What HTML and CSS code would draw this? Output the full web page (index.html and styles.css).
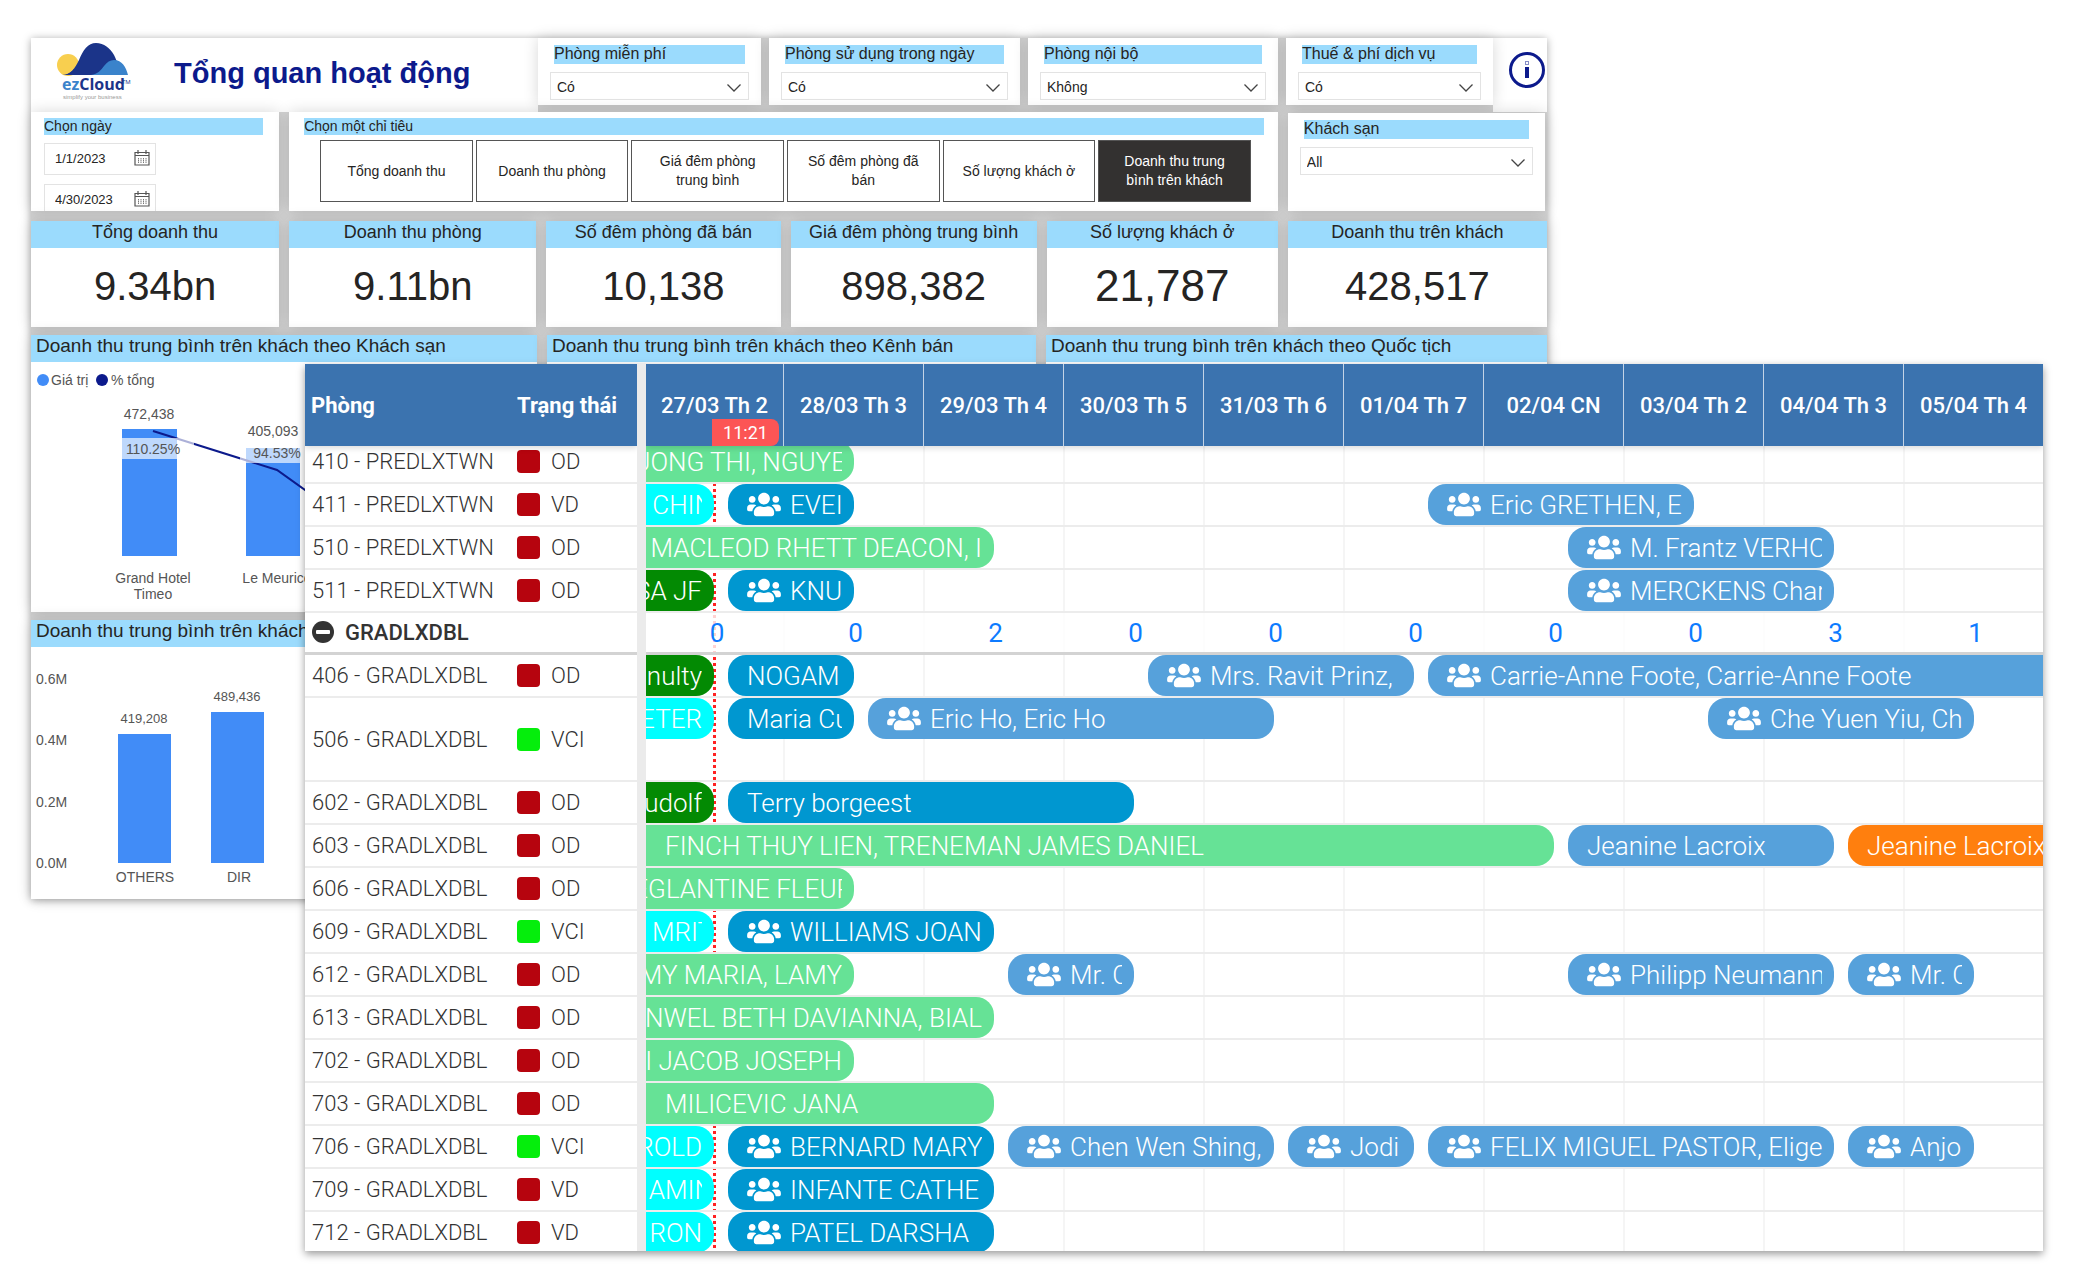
FILE: index.html
```html
<!DOCTYPE html>
<html lang="vi">
<head>
<meta charset="utf-8">
<title>ezCloud – Tổng quan hoạt động</title>
<link rel="stylesheet" href="styles.css">
</head>
<body>
<svg width="0" height="0" class="defs" aria-hidden="true">
  <symbol id="users" viewBox="0 0 640 512"><path d="M96 224c35.3 0 64-28.7 64-64s-28.700-64-64-64-64 28.700-64 64 28.700 64 64 64zm448 0c35.300 0 64-28.700 64-64s-28.700-64-64-64-64 28.700-64 64 28.700 64 64 64zm32 32h-64c-17.600 0-33.500 7.100-45.100 18.600 40.300 22.100 68.900 62 75.100 109.400h66c17.700 0 32-14.300 32-32v-32c0-35.300-28.700-64-64-64zm-256 0c61.900 0 112-50.100 112-112S381.900 32 320 32 208 82.100 208 144s50.100 112 112 112zm76.800 32h-8.300c-20.800 10-43.900 16-68.500 16s-47.600-6-68.500-16h-8.300C179.600 288 128 339.600 128 403.200V432c0 26.500 21.500 48 48 48h288c26.500 0 48-21.500 48-48v-28.800c0-63.600-51.600-115.200-115.200-115.200zm-223.700-13.400C161.500 263.100 145.600 256 128 256H64c-35.300 0-64 28.700-64 64v32c0 17.700 14.300 32 32 32h65.900c6.300-47.400 34.900-87.300 75.200-109.400z"/></symbol>
  <symbol id="chevron" viewBox="0 0 14 8"><path d="M.5.500 7 7 13.500.500" fill="none" stroke="#444" stroke-width="1.300"/></symbol>
  <symbol id="calendar" viewBox="0 0 16 16"><path d="M1 2.500h14v12.500H1zM1 5.500h14M4 0v4M12 0v4" fill="none" stroke="#555" stroke-width="1.200"/><path d="M4.500 8v5M7 8v5M9.500 8v5M12 8v5" stroke="#777" stroke-width="1" stroke-dasharray="1.500 .5"/></symbol>
</svg>

<main class="stage">
  <section class="dash">
    <div class="row row-top">
      <header class="brand">
        <svg class="logo" width="76" height="60" viewBox="0 0 76 60" role="img" aria-label="ezCloud">
          <circle cx="12" cy="23" r="11" fill="#f8cf4f"/>
          <path d="M6 33C15 33 19 26 23 18 27 8 32 1 40 1c8 0 14 5 18 12 3 6 5 14 10 20z" fill="#1b3489"/>
          <path d="M5 33c6 0 10-2 13-6l14 6z" fill="#1b3489"/>
          <path d="M35 33c7-1 10-5 13-9 3-4 6-6 10-6 8 0 12 7 14 15z" fill="#3a83cb"/>
          <text x="6" y="48" class="logo-name"><tspan fill="#3a83cb">ez</tspan><tspan fill="#1b3489">Cloud</tspan></text>
          <text x="66" y="42" class="logo-tm">TM</text>
          <text x="7" y="57" class="logo-tag">simplify your business</text>
        </svg>
        <h1>Tổng quan hoạt động</h1>
      </header>
      <div class="info"><button type="button" class="info-btn" aria-label="Thông tin">
        <svg width="38" height="38" viewBox="0 0 38 38"><circle cx="19" cy="19" r="16.500" fill="none" stroke="#0c1a8c" stroke-width="3"/><path d="M17 16h4v11h-4z" fill="#0c1a8c"/><path d="M17.500 10.500h3v3h-3z" fill="none" stroke="#0c1a8c" stroke-width="1" stroke-dasharray="1 1"/></svg>
      </button></div>
      <div class="card filter f1"><label for="free">Phòng miễn phí</label><div class="pick"><select id="free"><option>Có</option><option>Không</option></select><svg width="14" height="8"><use href="#chevron"/></svg></div></div>
      <div class="card filter f2"><label for="dayuse">Phòng sử dụng trong ngày</label><div class="pick"><select id="dayuse"><option>Có</option><option>Không</option></select><svg width="14" height="8"><use href="#chevron"/></svg></div></div>
      <div class="card filter f3"><label for="internal">Phòng nội bộ</label><div class="pick"><select id="internal"><option>Không</option><option>Có</option></select><svg width="14" height="8"><use href="#chevron"/></svg></div></div>
      <div class="card filter f4"><label for="tax">Thuế &amp; phí dịch vụ</label><div class="pick"><select id="tax"><option>Có</option><option>Không</option></select><svg width="14" height="8"><use href="#chevron"/></svg></div></div>
    </div>

    <div class="row row-mid">
      <div class="card dates">
        <label for="from" class="cap">Chọn ngày</label>
        <div class="date"><input id="from" type="text" value="1/1/2023"><svg width="16" height="16"><use href="#calendar"/></svg></div>
        <div class="date"><input type="text" value="4/30/2023" aria-label="Đến ngày"><svg width="16" height="16"><use href="#calendar"/></svg></div>
      </div>
      <div class="card metrics">
        <div class="cap">Chọn một chỉ tiêu</div>
        <div class="metric-list">
          <button type="button">Tổng doanh thu</button>
          <button type="button">Doanh thu phòng</button>
          <button type="button">Giá đêm phòng trung bình</button>
          <button type="button">Số đêm phòng đã bán</button>
          <button type="button">Số lượng khách ở</button>
          <button type="button" class="on">Doanh thu trung bình trên khách</button>
        </div>
      </div>
      <div class="card filter hotel"><label for="hotel">Khách sạn</label><div class="pick"><select id="hotel"><option>All</option></select><svg width="14" height="8"><use href="#chevron"/></svg></div></div>
    </div>

    <div class="row row-kpi">
      <div class="card kpi"><h2>Tổng doanh thu</h2><p>9.34bn</p></div>
      <div class="card kpi"><h2>Doanh thu phòng</h2><p>9.11bn</p></div>
      <div class="card kpi"><h2>Số đêm phòng đã bán</h2><p>10,138</p></div>
      <div class="card kpi"><h2>Giá đêm phòng trung bình</h2><p>898,382</p></div>
      <div class="card kpi big"><h2>Số lượng khách ở</h2><p>21,787</p></div>
      <div class="card kpi"><h2>Doanh thu trên khách</h2><p>428,517</p></div>
    </div>

    <div class="row row-chart">
      <div class="card chart"><h2>Doanh thu trung bình trên khách theo Khách sạn</h2>
        <svg width="420" height="250" viewBox="0 0 420 250">
          <circle cx="12" cy="18" r="6" fill="#418cf7"/><text x="20" y="23">Giá trị</text>
          <circle cx="71" cy="18" r="6" fill="#0c1a8c"/><text x="80" y="23">% tổng</text>
          <g fill="#418cf7"><path d="M91 67h55v127H91zM215 86h54v108h-54z"/></g>
          <path d="M122 69 246 108 330 168" fill="none" stroke="#0c1a8c" stroke-width="2"/>
          <g fill="#fff" fill-opacity=".66"><path d="M91 76h72v21H91zM209 86h72v15h-72z"/></g>
          <g text-anchor="middle"><text x="118" y="57">472,438</text><text x="242" y="74">405,093</text>
          <text x="122" y="92">110.25%</text><text x="246" y="96">94.53%</text>
          <text x="122" y="221">Grand Hotel</text><text x="122" y="237">Timeo</text><text x="246" y="221">Le Meurice</text></g>
        </svg>
      </div>
      <div class="card chart"><h2>Doanh thu trung bình trên khách theo Kênh bán</h2></div>
      <div class="card chart"><h2>Doanh thu trung bình trên khách theo Quốc tịch</h2></div>
    </div>

    <div class="row row-chart">
      <div class="card chart"><h2>Doanh thu trung bình trên khách</h2>
        <svg width="420" height="252" viewBox="0 0 420 252">
          <text x="5" y="37">0.6M</text><text x="5" y="98">0.4M</text><text x="5" y="160">0.2M</text><text x="5" y="221">0.0M</text>
          <path d="M87 87h53v129H87zM180 65h53v151h-53z" fill="#418cf7"/>
          <g text-anchor="middle"><text x="113" y="76" class="small">419,208</text><text x="206" y="54" class="small">489,436</text>
          <text x="114" y="235">OTHERS</text><text x="208" y="235">DIR</text></g>
        </svg>
      </div>
    </div>
  </section>

  <section class="plan">
    <div class="rooms">
      <table>
        <thead><tr><th scope="col">Phòng</th><th scope="col">Trạng thái</th></tr></thead>
      </table>
      <div class="scrolled">
      <table>
        <tbody>
          <tr><td>410 - PREDLXTWN</td><td><i></i>OD</td></tr>
          <tr><td>411 - PREDLXTWN</td><td><i></i>VD</td></tr>
          <tr><td>510 - PREDLXTWN</td><td><i></i>OD</td></tr>
          <tr><td>511 - PREDLXTWN</td><td><i></i>OD</td></tr>
          <tr class="group"><th colspan="2" scope="rowgroup"><button type="button" aria-label="Thu gọn"><svg width="22" height="22" viewBox="0 0 22 22"><circle cx="11" cy="11" r="11" fill="#333"/><rect x="4" y="9" width="14" height="4" rx="1" fill="#fff"/></svg></button>GRADLXDBL</th></tr>
          <tr><td>406 - GRADLXDBL</td><td><i></i>OD</td></tr>
          <tr class="tall"><td>506 - GRADLXDBL</td><td><i class="ok"></i>VCI</td></tr>
          <tr><td>602 - GRADLXDBL</td><td><i></i>OD</td></tr>
          <tr><td>603 - GRADLXDBL</td><td><i></i>OD</td></tr>
          <tr><td>606 - GRADLXDBL</td><td><i></i>OD</td></tr>
          <tr><td>609 - GRADLXDBL</td><td><i class="ok"></i>VCI</td></tr>
          <tr><td>612 - GRADLXDBL</td><td><i></i>OD</td></tr>
          <tr><td>613 - GRADLXDBL</td><td><i></i>OD</td></tr>
          <tr><td>702 - GRADLXDBL</td><td><i></i>OD</td></tr>
          <tr><td>703 - GRADLXDBL</td><td><i></i>OD</td></tr>
          <tr><td>706 - GRADLXDBL</td><td><i class="ok"></i>VCI</td></tr>
          <tr><td>709 - GRADLXDBL</td><td><i></i>VD</td></tr>
          <tr><td>712 - GRADLXDBL</td><td><i></i>VD</td></tr>
        </tbody>
      </table>
      </div>
    </div>

    <div class="time">
      <div class="days head"><span>27/03 Th 2</span><span>28/03 Th 3</span><span>29/03 Th 4</span><span>30/03 Th 5</span><span>31/03 Th 6</span><span>01/04 Th 7</span><span>02/04 CN</span><span>03/04 Th 2</span><span>04/04 Th 3</span><span>05/04 Th 4</span><b class="now">11:21</b></div>
      <div class="scrolled lanes">
        <div class="days lines"><i></i><i></i><i></i><i></i><i></i><i></i><i></i><i></i><i></i><i></i></div>
        <div class="now-line"></div>

        <div class="lane"><div class="bar green tail nick" style="grid-column:1/5"><span>UONG THI, NGUYE</span></div></div>
        <div class="lane"><div class="bar cyan tail cut" style="grid-column:1/2"><span>CHIN</span></div><div class="bar blue" style="grid-column:3/5"><svg><use href="#users"/></svg><span>EVEI</span></div><div class="bar sky" style="grid-column:18/23"><svg><use href="#users"/></svg><span>Eric GRETHEN, E</span></div></div>
        <div class="lane"><div class="bar green tail" style="grid-column:1/8"><span>MACLEOD RHETT DEACON, I</span></div><div class="bar sky" style="grid-column:21/26"><svg><use href="#users"/></svg><span>M. Frantz VERHO</span></div></div>
        <div class="lane"><div class="bar forest tail" style="grid-column:1/2"><span>SA JF</span></div><div class="bar blue" style="grid-column:3/5"><svg><use href="#users"/></svg><span>KNU</span></div><div class="bar sky" style="grid-column:21/26"><svg><use href="#users"/></svg><span>MERCKENS Char</span></div></div>
        <div class="days counts"><span>0</span><span>0</span><span>2</span><span>0</span><span>0</span><span>0</span><span>0</span><span>0</span><span>3</span><span>1</span></div>
        <div class="lane"><div class="bar forest tail" style="grid-column:1/2"><span>nulty</span></div><div class="bar blue" style="grid-column:3/5"><span>NOGAM</span></div><div class="bar sky" style="grid-column:12/17"><svg><use href="#users"/></svg><span>Mrs. Ravit Prinz,</span></div><div class="bar sky open" style="grid-column:18/31"><svg><use href="#users"/></svg><span>Carrie-Anne Foote, Carrie-Anne Foote</span></div></div>
        <div class="lane tall"><div class="bar cyan tail" style="grid-column:1/2"><span>ETER</span></div><div class="bar blue" style="grid-column:3/5"><span>Maria Cu</span></div><div class="bar sky" style="grid-column:6/14"><svg><use href="#users"/></svg><span>Eric Ho, Eric Ho</span></div><div class="bar sky" style="grid-column:24/29"><svg><use href="#users"/></svg><span>Che Yuen Yiu, Ch</span></div></div>
        <div class="lane"><div class="bar forest tail" style="grid-column:1/2"><span>udolf</span></div><div class="bar blue" style="grid-column:3/11"><span>Terry borgeest</span></div></div>
        <div class="lane"><div class="bar green from" style="grid-column:1/20"><span>FINCH THUY LIEN, TRENEMAN JAMES DANIEL</span></div><div class="bar sky" style="grid-column:21/26"><span>Jeanine Lacroix</span></div><div class="bar orange open" style="grid-column:27/31"><span>Jeanine Lacroix</span></div></div>
        <div class="lane"><div class="bar green tail cut" style="grid-column:1/5"><span>EGLANTINE FLEUR</span></div></div>
        <div class="lane"><div class="bar cyan tail cut" style="grid-column:1/2"><span>MRIT</span></div><div class="bar blue" style="grid-column:3/8"><svg><use href="#users"/></svg><span>WILLIAMS JOAN</span></div></div>
        <div class="lane"><div class="bar green tail" style="grid-column:1/5"><span>MY MARIA, LAMY</span></div><div class="bar sky" style="grid-column:9/11"><svg><use href="#users"/></svg><span>Mr. C</span></div><div class="bar sky" style="grid-column:21/26"><svg><use href="#users"/></svg><span>Philipp Neumann</span></div><div class="bar sky" style="grid-column:27/29"><svg><use href="#users"/></svg><span>Mr. C</span></div></div>
        <div class="lane"><div class="bar green tail" style="grid-column:1/8"><span>NWEL BETH DAVIANNA, BIAL</span></div></div>
        <div class="lane"><div class="bar green tail" style="grid-column:1/5"><span>I JACOB JOSEPH</span></div></div>
        <div class="lane"><div class="bar green from" style="grid-column:1/8"><span>MILICEVIC JANA</span></div></div>
        <div class="lane"><div class="bar cyan tail" style="grid-column:1/2"><span>ROLD</span></div><div class="bar blue" style="grid-column:3/8"><svg><use href="#users"/></svg><span>BERNARD MARY</span></div><div class="bar sky" style="grid-column:9/14"><svg><use href="#users"/></svg><span>Chen Wen Shing,</span></div><div class="bar sky" style="grid-column:15/17"><svg><use href="#users"/></svg><span>Jodi</span></div><div class="bar sky" style="grid-column:18/26"><svg><use href="#users"/></svg><span>FELIX MIGUEL PASTOR, Elige</span></div><div class="bar sky" style="grid-column:27/29"><svg><use href="#users"/></svg><span>Anjo</span></div></div>
        <div class="lane"><div class="bar cyan tail cut" style="grid-column:1/2"><span>AMIN</span></div><div class="bar blue" style="grid-column:3/8"><svg><use href="#users"/></svg><span>INFANTE CATHE</span></div></div>
        <div class="lane"><div class="bar cyan tail" style="grid-column:1/2"><span>RON</span></div><div class="bar blue" style="grid-column:3/8"><svg><use href="#users"/></svg><span>PATEL DARSHA</span></div></div>
      </div>
    </div>
  </section>
</main>
</body>
</html>
```
FILE: styles.css
```css
* { box-sizing: border-box; }
body { margin: 0; background: #fff; color: #252423; font-family: "Liberation Sans", Arial, sans-serif; }
h1, h2, p { margin: 0; font-weight: normal; }
button, input, select { font: inherit; color: inherit; margin: 0; }
.defs { display: block; position: absolute; }

.stage {
  display: grid;
  grid-template-columns: 274fr 1242fr 496fr;
  grid-template-rows: 326px auto;
  padding: 38px 34px 31px 31px;
}

/* Dashboard */
.dash {
  grid-area: 1 / 1 / 3 / 3;
  align-self: start;
  min-width: 0;
  background: #d4d4d4;
  box-shadow: 0 1px 8px rgba(0, 0, 0, .35);
}
.row { display: grid; }
.card { min-width: 0; background: #fff; box-shadow: 0 0 14px rgba(0, 0, 0, .16); }

.row-top { grid-template-columns: 507fr 231fr 259fr 258fr 207fr 54fr; height: 74px; }
.row-top > * { grid-row: 1; }
.brand { grid-column: 1; display: flex; align-items: start; gap: 42px; padding: 4px 0 0 25px; background: #fff; }
.brand h1 { padding-top: 14px; font-size: 29px; line-height: 34px; font-weight: bold; color: #0c1a8c; white-space: nowrap; }
.logo { flex: none; width: 76px; }
.logo-name { font: bold 16px "Open Sans", sans-serif; }
.logo-tm { font: 6px "Open Sans", sans-serif; fill: #1b3489; }
.logo-tag { font: 6px "Liberation Sans", sans-serif; fill: #999; }
.info { grid-column: 6; padding: 13px 0 0 15px; background: #fff; }
.info-btn { display: block; padding: 0; border: 0; background: none; }
.info-btn svg { display: block; }

.filter { margin-right: 8px; margin-bottom: 7px; padding: 7px 12px 0; }
.filter label { display: block; margin: 0 4px; height: 19px; font-size: 16px; line-height: 18px; background: #9bdbfd; white-space: nowrap; }
.f1 { grid-column: 2; }
.f2 { grid-column: 3; }
.f3 { grid-column: 4; }
.f4 { grid-column: 5; margin-right: 0; }
.pick { display: grid; align-items: center; margin-top: 8px; }
.pick > * { grid-area: 1 / 1; }
.pick select { width: 100%; height: 28px; padding: 2px 6px 0; appearance: none; border: 1px solid #e3e3e3; border-radius: 0; background: #fff; font-size: 14px; }
.pick svg { justify-self: end; margin: 4px 8px 0 0; pointer-events: none; }

.row-mid { grid-template-columns: 258fr 998fr 259fr; height: 99px; }
.row-mid > * { margin-right: 10px; }
.cap { display: block; height: 17px; font-size: 14px; line-height: 17px; background: #9bdbfd; }
.dates { padding: 6px 16px 0 13px; overflow: hidden; }
.date { display: flex; align-items: center; width: 112px; height: 32px; margin: 8px 0 9px; padding: 0 5px 2px 0; border: 1px solid #e3e3e3; }
.date input { flex: 1; min-width: 0; padding: 0 0 0 10px; border: 0; background: none; font-size: 13px; }
.metrics { padding: 6px 14px 0 15px; }
.metric-list { display: grid; grid-template-columns: repeat(6, 1fr); gap: 3px; margin: 5px 13px 0 16px; height: 62px; }
.metric-list button { padding: 0 16px; border: 1px solid #555; border-radius: 0; background: #fff; font-size: 14px; line-height: 19px; }
.metric-list .on { background: #333130; color: #fff; padding: 0 12px; }
.row-mid .hotel { margin: 1px 2px 0 0; padding-top: 7px; }

.row-kpi { grid-template-columns: 258fr 257fr 244fr 256fr 241fr 259fr; margin-top: 10px; height: 106px; }
.row-kpi > * { margin-right: 10px; }
.row-kpi > :last-child { margin-right: 0; }
.kpi { text-align: center; }
.kpi h2 { height: 27px; font-size: 18px; line-height: 22px; background: #9bdbfd; white-space: nowrap; }
.kpi p { padding-top: 14px; font-size: 40px; line-height: 48px; }
.kpi.big p { font-size: 44px; }

.row-chart { grid-template-columns: 516fr 499fr 501fr; margin-top: 8px; }
.row-chart > * { margin-right: 10px; }
.row-chart > :nth-child(3) { margin-right: 0; }
.chart h2 { height: 27px; padding-left: 5px; font-size: 19px; line-height: 22px; background: #9bdbfd; white-space: nowrap; overflow: hidden; }
.chart svg { display: block; font-size: 14px; fill: #555; }
.chart .small { font-size: 13px; }

/* Room plan */
.plan {
  grid-area: 2 / 2 / 3 / 4;
  z-index: 1;
  display: grid;
  grid-template-columns: 332fr 1406fr;
  min-width: 0;
  overflow: hidden;
  background: #fff;
  box-shadow: 0 3px 8px rgba(0, 0, 0, .4);
  font-family: Roboto, sans-serif;
  font-weight: 300;
}
.rooms, .time { min-width: 0; overflow: hidden; }
.scrolled { margin: -5px 0 -4px; }
.rooms table { width: 100%; border-collapse: separate; border-spacing: 0; table-layout: fixed; }
.rooms thead { position: relative; z-index: 1; }
.rooms thead tr { height: 82px; }
.rooms thead th { padding: 0 0 0 6px; background: #3b73af; color: #fff; font-size: 22px; font-weight: 700; text-align: left; white-space: nowrap; }
.rooms table > * > tr > :nth-child(2) { width: 124px; padding-left: 4px; }
.rooms thead, .head { box-shadow: 0 2px 6px rgba(0, 0, 0, .15); }
.rooms tbody tr { height: 43px; }
.rooms tbody .tall { height: 84px; }
.rooms tbody .group { height: 42px; }
.rooms td, .rooms tbody th { padding: 1px 0 0 7px; border-bottom: 2px solid #ececec; font-size: 22px; line-height: 28px; color: #333; white-space: nowrap; text-align: left; }
.rooms tbody th { border-bottom: 3px solid #d3d3d3; font-weight: 500; }
.rooms i { display: inline-block; width: 23px; height: 23px; margin-right: 11px; border-radius: 4px; background: #b6040e; vertical-align: -4px; }
.rooms .ok { background: #05ee0c; }
.rooms th button { padding: 0; margin-right: 11px; border: 0; background: none; vertical-align: -3px; }
.rooms th svg { display: block; }

.time { border-left: 9px solid #ebebeb; }
.days { display: grid; grid-template-columns: 137fr repeat(9, 140fr); }
.head { position: relative; z-index: 1; height: 82px; background: #3b73af; color: #fff; font-size: 22px; font-weight: 500; }
.head span { display: flex; align-items: center; justify-content: center; border-left: 1px solid #c3d3e6; white-space: nowrap; }
.head span:first-child { border: 0; }
.now { position: absolute; left: calc(100% * 66 / 1397); bottom: 0; width: 67px; height: 27px; border-radius: 0 8px 8px 0; background: #fc5555; font-size: 18px; font-weight: 400; line-height: 27px; text-align: center; }
.lanes { position: relative; }
.lines { position: absolute; inset: 0; }
.lines i { border-left: 2px solid #f5f5f5; }
.lines i:first-child { border: 0; }
.now-line { position: absolute; top: 0; bottom: 0; left: calc(100% * 67 / 1397); width: 3px; background: repeating-linear-gradient(#f22 0 3px, transparent 3px 6px); }
.lane, .counts { position: relative; height: 43px; border-bottom: 2px solid #ececec; }
.lane { display: grid; grid-template-columns: 68fr 14fr 55fr repeat(9, 71fr 14fr 55fr); grid-template-rows: 41px; }
.lane.tall { height: 84px; }
.counts { height: 42px; border-bottom: 3px solid #d3d3d3; background: rgba(255, 255, 255, .8); color: #0d7bff; font-size: 26px; font-weight: 400; line-height: 40px; text-align: center; }
.counts span { padding-left: 5px; }
.bar { grid-row: 1; display: flex; align-items: center; gap: 9px; min-width: 0; padding: 0 12px 0 19px; border-radius: 18px; color: #fff; font-size: 26px; line-height: 40px; white-space: nowrap; }
.bar svg { flex: none; width: 34px; height: 27px; fill: #fff; }
.bar span { flex: 1; min-width: 0; overflow: hidden; }
.tail, .from { border-radius: 0 18px 18px 0; }
.tail { padding-left: 0; }
.tail span { display: flex; justify-content: flex-end; }
.tail span::after { content: ""; }
/* the guest name runs on under the end of the bar */
.cut span::after { margin-right: -11px; }
.nick span::after { margin-right: -4px; }
.open { border-radius: 18px 0 0 18px; padding-right: 0; }
.green { background: #66e296; }
.cyan { background: #00ffff; }
.forest { background: #038a03; }
.blue { background: #0097d0; }
.sky { background: #56a1db; }
.orange { background: #ff7f0e; }
```
